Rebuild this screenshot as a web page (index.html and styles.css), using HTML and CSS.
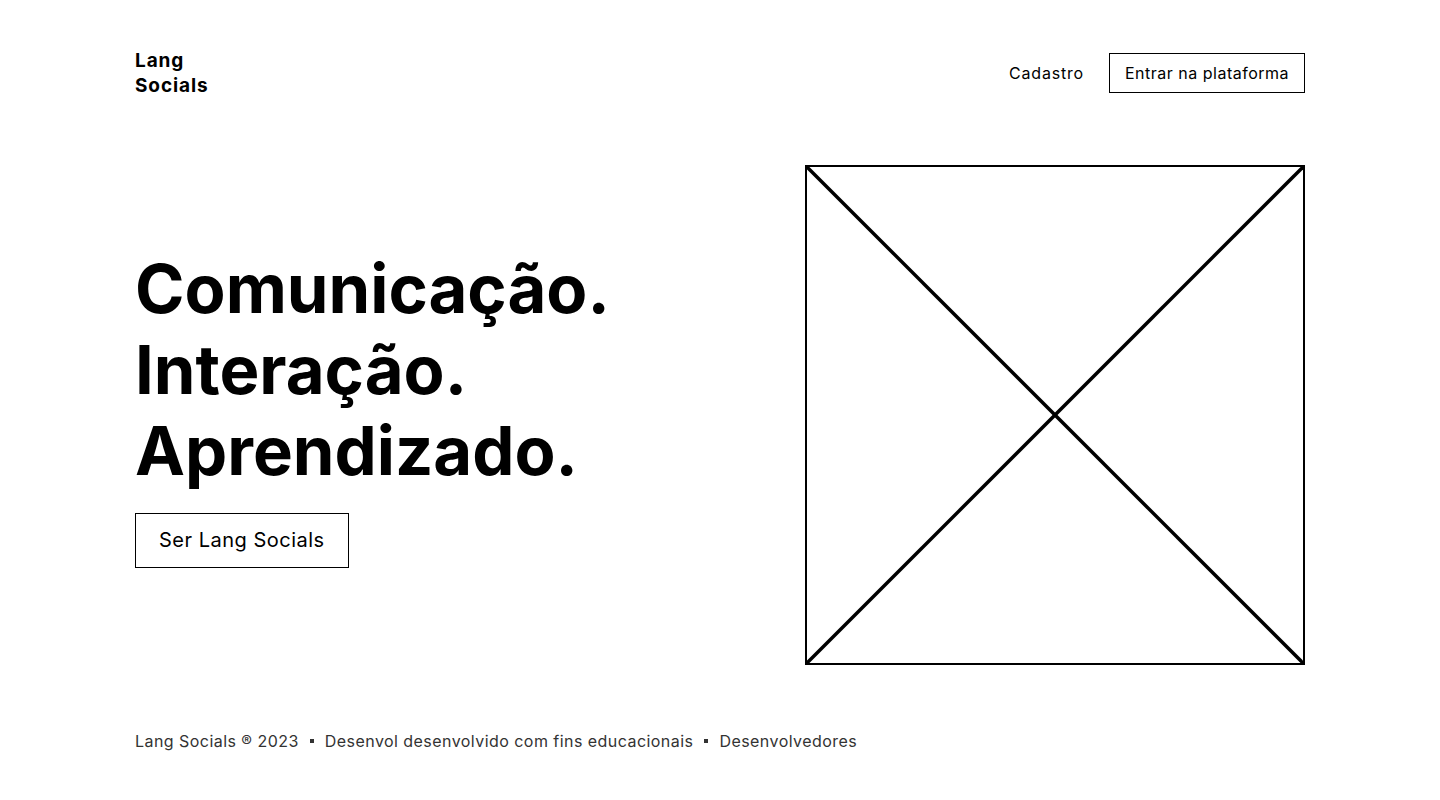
FILE: index.html
```html
<!DOCTYPE html>
<html lang="pt-BR">
<head>
<meta charset="utf-8">
<title>Lang Socials</title>
<link rel="stylesheet" href="styles.css">
</head>
<body>
<div class="page">
  <header class="header">
    <div class="logo">Lang<br>Socials</div>
    <nav class="nav">
      <a class="nav-link" href="#">Cadastro</a>
      <a class="nav-btn" href="#">Entrar na plataforma</a>
    </nav>
  </header>
  <main class="hero">
    <div class="hero-text">
      <h1 class="title">Comunicação.<br>Interação.<br>Aprendizado.</h1>
      <a class="cta" href="#">Ser Lang Socials</a>
    </div>
    <div class="placeholder">
      <svg viewBox="0 0 500 500" preserveAspectRatio="none" class="ph-svg">
        <line x1="0" y1="0" x2="500" y2="500" />
        <line x1="500" y1="0" x2="0" y2="500" />
      </svg>
    </div>
  </main>
  <footer class="footer">
    <span>Lang Socials ® 2023</span>
    <span class="dot"></span>
    <span>Desenvol desenvolvido com fins educacionais</span>
    <span class="dot"></span>
    <span>Desenvolvedores</span>
  </footer>
</div>
</body>
</html>
```

FILE: styles.css
```css
* { box-sizing: border-box; }
html, body { margin: 0; padding: 0; background: #fff; }
body {
  font-family: Inter, "Noto Sans", sans-serif;
  color: #000;
}
a { color: inherit; text-decoration: none; }
.page {
  width: 1170px;
  margin: 0 auto;
  padding-top: 48px;
}
.header {
  display: flex;
  justify-content: space-between;
  align-items: center;
}
.logo {
  font-weight: 700;
  font-size: 19px;
  line-height: 25px;
  letter-spacing: 0.9px;
}
.nav {
  display: flex;
  align-items: center;
  gap: 25px;
}
.nav-link {
  font-size: 16px;
  letter-spacing: 0.8px;
}
.nav-btn {
  display: block;
  border: 1px solid #000;
  height: 40px;
  line-height: 38px;
  padding: 0 15px;
  font-size: 16px;
  letter-spacing: 0.5px;
}
.hero {
  display: flex;
  justify-content: space-between;
  align-items: center;
  margin-top: 67px;
}
.hero-text {
  display: flex;
  flex-direction: column;
  align-items: flex-start;
  padding-bottom: 14px;
}
.title {
  margin: 0;
  font-size: 67px;
  line-height: 81px;
  font-weight: 700;
  letter-spacing: 0;
}
.cta {
  margin-top: 22px;
  border: 1px solid #000;
  height: 55px;
  line-height: 53px;
  padding: 0 23px;
  font-size: 20px;
  letter-spacing: 0.5px;
}
.placeholder {
  width: 500px;
  height: 500px;
  border: 2px solid #000;
}
.ph-svg {
  display: block;
  width: 100%;
  height: 100%;
}
.ph-svg line {
  stroke: #000;
  stroke-width: 3.5;
}
.footer {
  display: flex;
  align-items: center;
  gap: 11px;
  margin-top: 66px;
  font-size: 16px;
  color: #333;
  letter-spacing: 0.45px;
}
.dot {
  width: 4px;
  height: 4px;
  background: #333;
}
```
